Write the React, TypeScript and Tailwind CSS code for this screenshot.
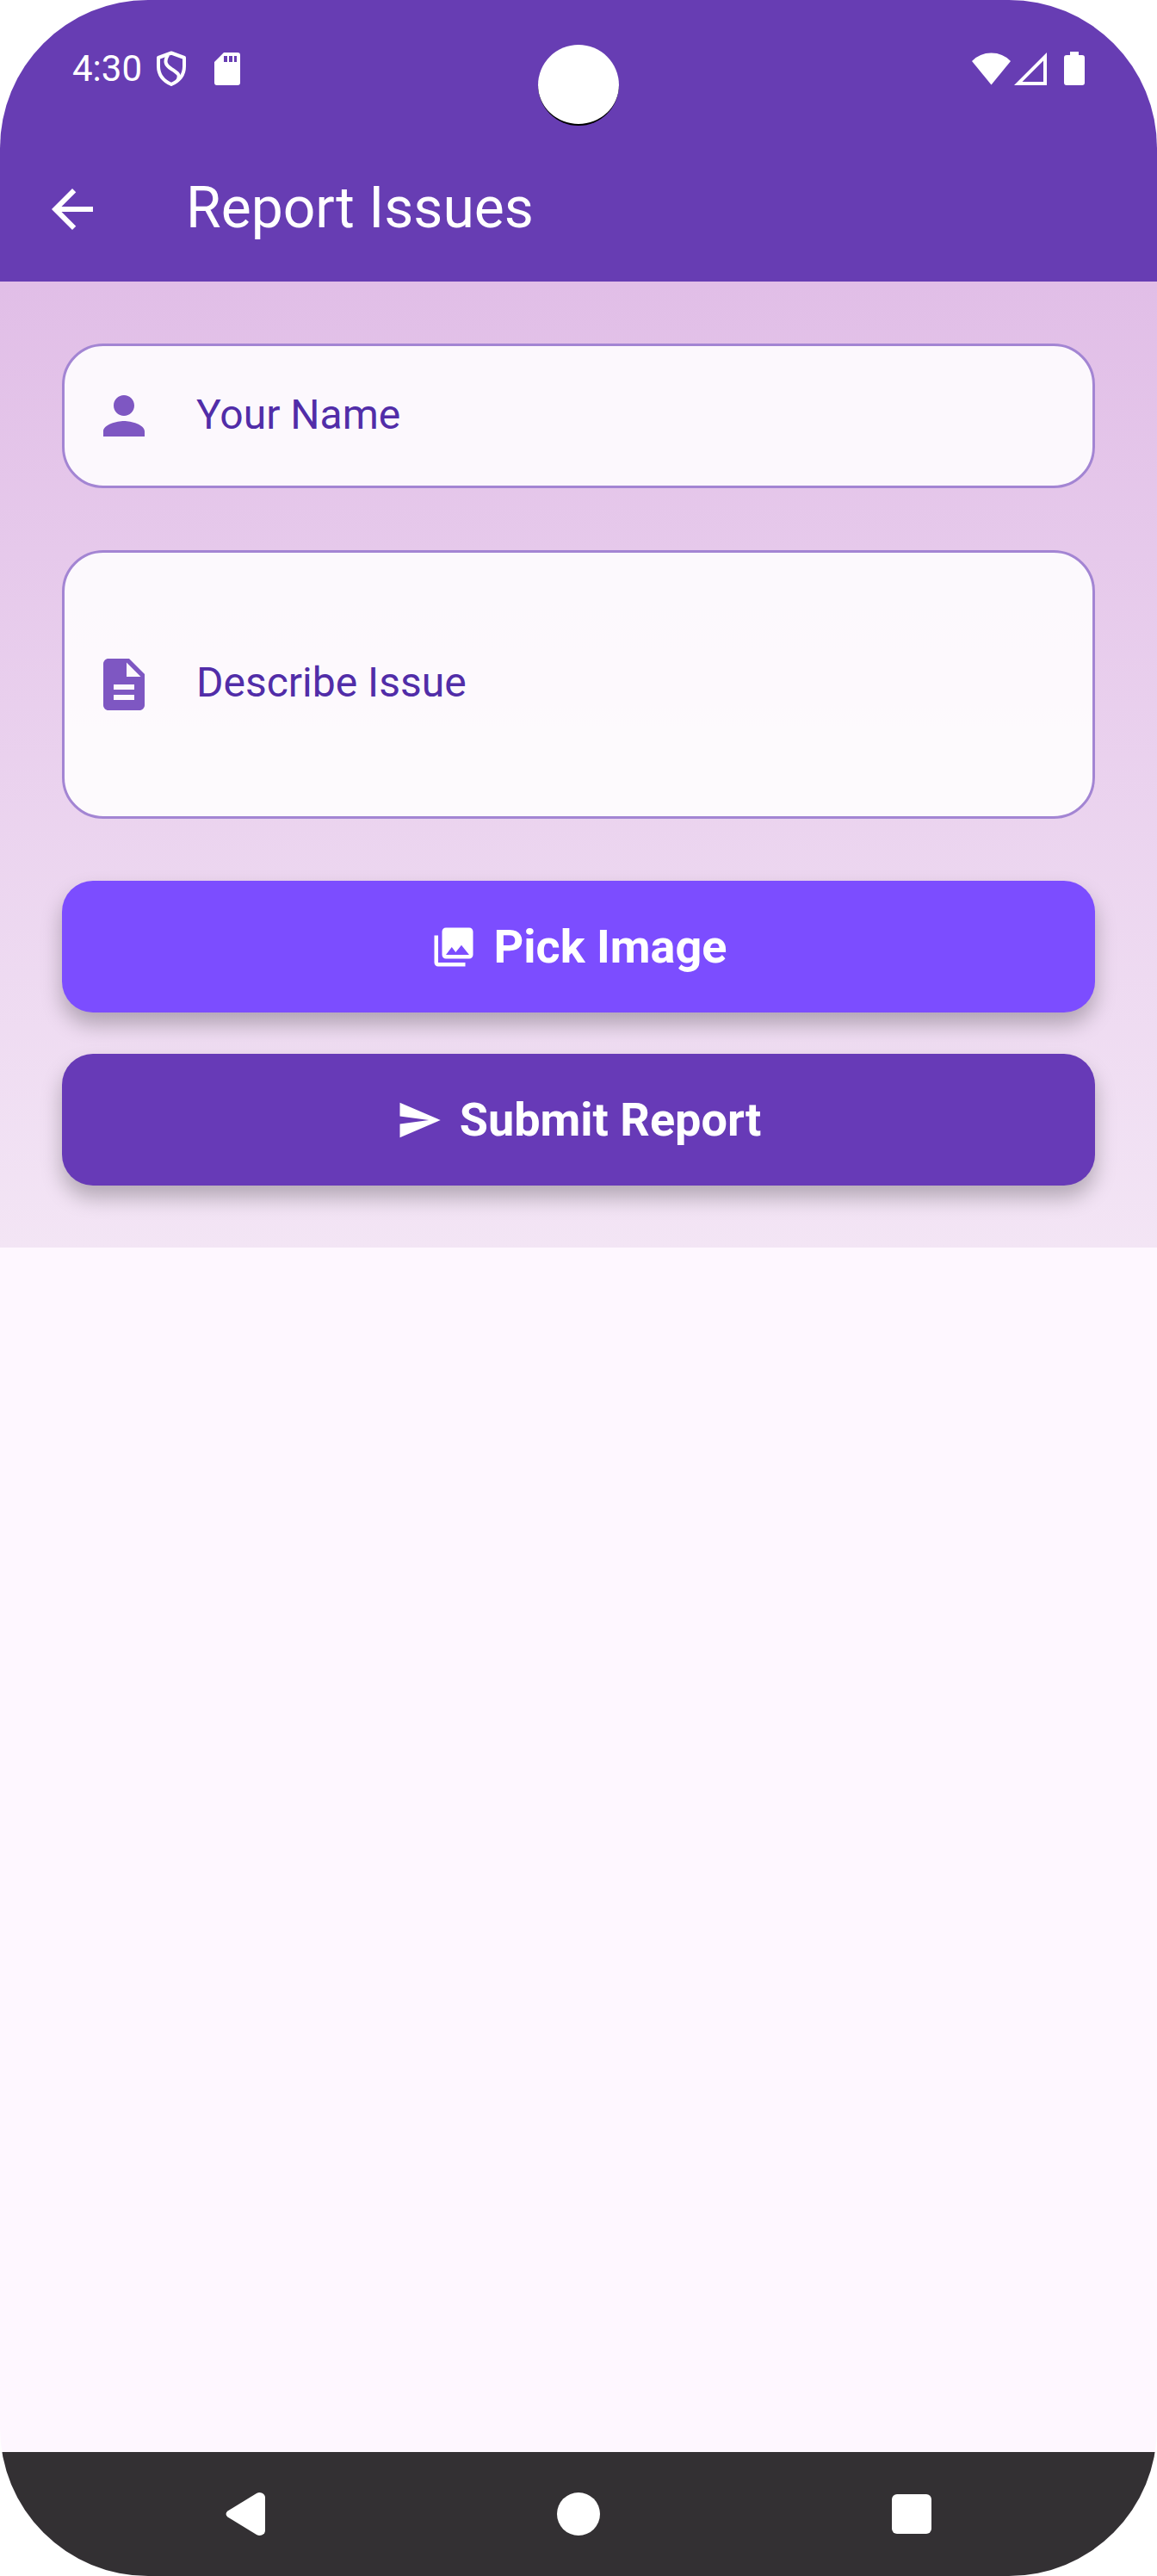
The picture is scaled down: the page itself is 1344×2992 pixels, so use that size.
import type { ReactNode } from "react";
import {
  MdArrowBack,
  MdDescription,
  MdPerson,
  MdPhotoLibrary,
  MdSend,
} from "react-icons/md";

function StatusBar() {
  return (
    <div className="relative flex h-[159px] items-center justify-between px-[84px] text-white">
      <div className="flex items-center">
        <span className="text-[42px] leading-[48px]">4:30</span>
        <svg className="ml-4 h-[42px] w-[36px]" viewBox="0 0 36 42" fill="none" stroke="currentColor" strokeWidth="4" strokeLinejoin="round" aria-hidden="true">
          <path d="M18 2.500 L3 8 V18 C3 28 9 35 18 39 C27 35 33 28 33 18 V8 Z" />
          <path d="M14 5 C9 13 12 17 18 21 C26 26 29 28 25 35" />
        </svg>
        <svg className="ml-8 h-[38px] w-[30px]" viewBox="0 0 30 38" fill="currentColor" aria-hidden="true">
          <path fillRule="evenodd" d="M11 0 H27 Q30 0 30 3 V35 Q30 38 27 38 H3 Q0 38 0 35 V11 Z M11 4 V11 H15 V4 Z M17 4 V11 H21 V4 Z M23 4 V11 H26 V4 Z" />
        </svg>
      </div>
      <div className="absolute top-[52px] left-1/2 h-[94px] w-[94px] -translate-x-1/2 rounded-full border-b-2 border-black bg-white" />
      <div className="flex items-center">
        <svg className="h-[38px] w-[45px]" viewBox="0 0 45 38" fill="currentColor" aria-hidden="true">
          <path d="M0 10 Q9 0.500 22.500 0.500 Q36 0.500 45 10 L22.500 37.500 Z" />
        </svg>
        <svg className="ml-1 h-[38px] w-[38px]" viewBox="0 0 38 38" fill="currentColor" aria-hidden="true">
          <path fillRule="evenodd" d="M38 0 V38 H0 Z M34 9.500 L9.500 34 H34 Z" />
        </svg>
        <svg className="ml-5 h-[39px] w-[24px]" viewBox="0 0 24 39" fill="currentColor" aria-hidden="true">
          <path d="M7 0 H17 V4 H21 Q24 4 24 7 V36 Q24 39 21 39 H3 Q0 39 0 36 V7 Q0 4 3 4 H7 Z" />
        </svg>
      </div>
    </div>
  );
}

function Field({ id, icon, children }: { id: string; icon: ReactNode; children: ReactNode }) {
  return (
    <div className="flex items-center rounded-[48px] border-[3px] border-[#a385d3] bg-white/88 pr-9 pl-[33px]">
      <label htmlFor={id} className="mr-12 shrink-0 text-[72px] text-[#7e57c2]">
        {icon}
      </label>
      {children}
    </div>
  );
}

const inputStyle =
  "block min-w-0 flex-1 resize-none bg-transparent text-[48px] leading-[72px] text-[#512da8] outline-none placeholder:text-[#512da8] placeholder:opacity-100";

const buttonStyle =
  "flex h-[153px] w-full items-center justify-center gap-5 rounded-[36px] text-[54px] leading-[63px] font-bold text-white shadow-[0_14px_24px_rgba(0,0,0,0.26)]";

export default function App() {
  return (
    <div className="min-h-screen bg-white font-['Roboto',sans-serif]">
      <div className="flex min-h-screen flex-col overflow-hidden rounded-[172px] bg-[#fef7ff]">
        <header className="bg-[#673db3]">
          <StatusBar />
          <div className="flex h-[168px] items-center px-12 text-white">
            <button type="button" aria-label="Back" className="text-[72px]">
              <MdArrowBack />
            </button>
            <h1 className="ml-24 pb-0.5 text-[66px] leading-[84px] font-normal">Report Issues</h1>
          </div>
        </header>

        <main className="flex-1">
          <form className="flex flex-col gap-12 bg-linear-to-b from-[#e1bee7] to-[#f3e5f5] p-[72px]">
            <div className="flex flex-col gap-[72px]">
              <Field id="name" icon={<MdPerson />}>
                <input id="name" type="text" aria-label="Your Name" placeholder="Your Name" className={`${inputStyle} h-[162px] pb-1`} />
              </Field>
              <Field id="issue" icon={<MdDescription />}>
                <textarea id="issue" rows={1} aria-label="Describe Issue" placeholder="Describe Issue" className={`${inputStyle} pt-[115px] pb-[119px]`} />
              </Field>
              <button type="button" className={`${buttonStyle} bg-[#7c4dff]`}>
                <MdPhotoLibrary />
                Pick Image
              </button>
            </div>
            <button type="button" className={`${buttonStyle} bg-[#673ab7]`}>
              <MdSend />
              Submit Report
            </button>
          </form>
        </main>

        <nav className="grid h-36 grid-cols-3 place-items-center bg-[#333033] px-[91px] text-white">
          <button type="button" aria-label="Back">
            <svg className="h-[50px] w-[46px]" viewBox="0 0 46 50" fill="currentColor" aria-hidden="true">
              <path d="M36 1 Q39 -0.500 42 0.500 Q46 2 46 6 V44 Q46 48 42 49.500 Q39 50.500 36 49 L2.500 28.500 Q-1.500 25 2.500 21.500 Z" />
            </svg>
          </button>
          <button type="button" aria-label="Home" className="h-[50px] w-[50px] rounded-full bg-white" />
          <button type="button" aria-label="Recent apps" className="h-[46px] w-[46px] rounded-md bg-white" />
        </nav>
      </div>
    </div>
  );
}
